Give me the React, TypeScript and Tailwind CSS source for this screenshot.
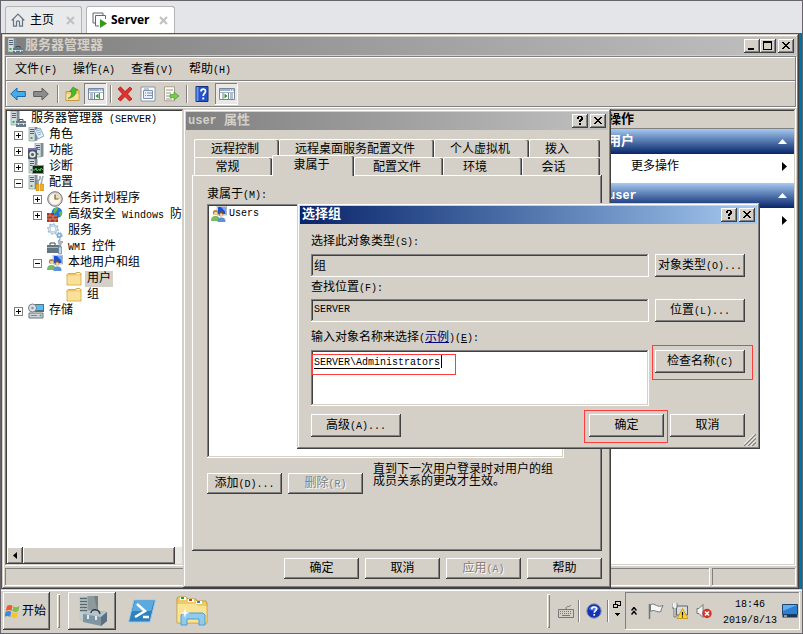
import type { ButtonHTMLAttributes, ReactNode } from "react";
import { clsx } from "clsx";

const raised =
  "bg-[#d4d0c8] shadow-[inset_-1px_-1px_#404040,inset_1px_1px_#fff,inset_-2px_-2px_#808080]";
const frame =
  "bg-[#d4d0c8] shadow-[inset_-1px_-1px_#404040,inset_1px_1px_#d4d0c8,inset_-2px_-2px_#808080,inset_2px_2px_#fff]";
const sunken =
  "shadow-[inset_-1px_-1px_#fff,inset_1px_1px_#808080,inset_-2px_-2px_#d4d0c8,inset_2px_2px_#404040]";
const thinSunken = "shadow-[inset_-1px_-1px_#fff,inset_1px_1px_#808080]";

// Latin runs are half as wide as the Chinese characters beside them
function T({ children, latin = "text-[10px]" }: { children: string; latin?: string }) {
  return (
    <>
      {children.split(/([\x20-\x7e]+)/).map((run, i) =>
        i % 2 ? (
          <span key={i} className={clsx("whitespace-pre", latin)}>
            {run}
          </span>
        ) : (
          run
        ),
      )}
    </>
  );
}

function Button({ className, children, ...rest }: ButtonHTMLAttributes<HTMLButtonElement>) {
  return (
    <button
      type="button"
      className={clsx(
        raised,
        "flex items-center justify-center pt-px whitespace-nowrap disabled:text-[#808080] disabled:[text-shadow:1px_1px_#fff]",
        className,
      )}
      {...rest}
    >
      <span>{children}</span>
    </button>
  );
}

function CaptionButton({ label, children }: { label: string; children: ReactNode }) {
  return (
    <button type="button" aria-label={label} className={clsx(raised, "h-[14px] w-4")}>
      <svg viewBox="0 0 16 14" className="block h-[14px] w-4" shapeRendering="crispEdges">
        {children}
      </svg>
    </button>
  );
}

const closeGlyph = (
  <path
    d="M4 3h2v1h1v1h2V4h1V3h2v1h-1v1h-1v1H9v1h1v1h1v1h1v1h-2V9H9V8H7v1H6v1H4V9h1V8h1V7h1V6H6V5H5V4H4z"
    fill="#000"
  />
);
const helpGlyph = (
  <path d="M5 3h1V2h4v1h1v3h-1v1H9v1H7V6h1V5h1V3H7v2H5zM7 9h2v2H7z" fill="#000" />
);

/* ---------- icons ---------- */

function ServerShape() {
  return (
    <>
      <path d="M7 0h2.500v13.500L7 14z" fill="#7f8d96" />
      <path d="M1 0h6v14H1z" fill="#d5dde2" stroke="#7b8992" strokeWidth=".6" />
      <path d="M2 2.500h4M2 4.500h4M2 6.500h4" stroke="#52626c" />
      <path d="M2.500 10h2v2h-2z" fill="#35b33c" />
    </>
  );
}

function Icon({ name, className = "size-4" }: { name: string; className?: string }) {
  return (
    <svg viewBox="0 0 16 16" className={clsx("block shrink-0", className)} aria-hidden="true">
      {icons[name]}
    </svg>
  );
}

const folder = (
  <>
    <path d="M1 3.500 2 2.500h7l1-1h4l1 1V14H1z" fill="#eec764" stroke="#c19739" strokeWidth=".7" />
    <path d="M1.500 4.500h13v9h-13z" fill="#fbe09a" />
    <path d="M10.500 2.800h3.500" stroke="#fff" />
  </>
);

const people = (
  <>
    <path d="M6 0h9.500v9H6z" fill="#dfe5ea" stroke="#8293a0" strokeWidth=".6" />
    <path d="M7 1h7.500v7H7z" fill="#1b4fd0" />
    <path d="M10 1h4.500v5z" fill="#77a8ff" />
    <circle cx="4.500" cy="6.500" r="2.600" fill="#b9813d" />
    <circle cx="4.800" cy="7.500" r="1.800" fill="#f3d2a9" />
    <path d="M0 15c0-4 2-5 4.500-5S9 11 9 15z" fill="#78bb65" />
    <circle cx="10" cy="8" r="2.400" fill="#84501e" />
    <circle cx="10.200" cy="9" r="1.700" fill="#f3d2a9" />
    <path d="M6.500 16c0-3.500 1.500-4.500 4-4.500s4 1 4 4.500z" fill="#5d93d6" />
  </>
);

const paneToggle = (
  <>
    <path d="M.5 2.500h15v11H.5z" fill="#fff" stroke="#7387a0" />
    <path d="M1 3h14v2H1z" fill="#9fb2ca" />
    <path d="M11 4h1m1 0h1" stroke="#fff" />
    <path d="M1 6.500h14" stroke="#a9b6c8" />
  </>
);

const icons: Record<string, ReactNode> = {
  server: (
    <>
      <ServerShape />
      <path d="M6 10h10v6H6z" fill="#667987" />
      <path d="M9 10V8.500h4V10" fill="none" stroke="#3e4e59" />
      <path d="M6 12.500h10" stroke="#bccad3" />
      <path d="M8 12h1v2H8zM13 12h1v2h-1z" fill="#e5ecf0" />
    </>
  ),
  roles: (
    <>
      <ServerShape />
      <path d="m6 3 6-2 4 8-6 3z" fill="#e5f0f8" stroke="#708fa8" strokeWidth=".8" />
      <path d="m8 4 4-1M9 6l4-1M10 8l3-1" stroke="#6ba1cb" strokeWidth=".8" />
    </>
  ),
  features: (
    <>
      <g transform="translate(6 0)">
        <ServerShape />
      </g>
      <path d="M0 6h9v10H0z" fill="#4a555d" />
      <path d="M0 5h10v2H0z" fill="#7c6eb5" />
      <circle cx="4.500" cy="11.500" r="3.200" fill="#e2e6e8" />
      <circle cx="4.500" cy="11.500" r="1.500" fill="#4d5960" />
    </>
  ),
  diagnostics: (
    <>
      <ServerShape />
      <path d="M4 6h12v9H4z" fill="#8f9ba2" />
      <path d="M5 7h10v7H5z" fill="#102410" />
      <path d="M5 11h2l1-2 1 3 2-2 1 2 1-3 2 2" fill="none" stroke="#37d33c" />
    </>
  ),
  config: (
    <>
      <ServerShape />
      <path d="M8 1v3l2 2v3M12 1v3l-2 2" fill="none" stroke="#8d9aa3" strokeWidth="1.500" />
      <path d="m15 1-2 8" stroke="#a1adb5" strokeWidth="1.500" />
      <path d="M8 9h3v7H8zM12.500 9h3v7h-3z" fill="#f3ae1d" stroke="#b6740b" strokeWidth=".5" />
    </>
  ),
  clock: (
    <>
      <circle cx="8" cy="8" r="7.300" fill="#cfd3d6" stroke="#72777b" />
      <circle cx="8" cy="8" r="5.600" fill="#fff8e5" />
      <path d="M8 2.400A5.600 5.600 0 0 1 13.600 8H8z" fill="#f5d9a4" />
      <path d="M8 3.500V8h3.500" fill="none" stroke="#5a5e62" strokeWidth="1.200" />
    </>
  ),
  firewall: (
    <>
      <circle cx="10" cy="5.500" r="5.300" fill="#2477d8" />
      <path d="M7 2c2-2 4-1 4 0S9 4 8 6 6 4 7 2zM12 5l3-1v3l-2 3z" fill="#66bd45" />
      <path d="M0 6h7v3h4v6H0z" fill="#a93722" />
      <path d="M0 9h10M0 12h11M3 6v3m3 0v3M3 12v3m5-3v3" stroke="#e9a38f" strokeWidth=".7" />
    </>
  ),
  gears: (
    <>
      <circle cx="6" cy="6" r="3.600" fill="none" stroke="#92b6d4" strokeWidth="2.200" />
      <circle cx="6" cy="6" r="5.200" fill="none" stroke="#92b6d4" strokeWidth="1.200" strokeDasharray="2 2" />
      <circle cx="6" cy="6" r="3.600" fill="none" stroke="#dceaf5" />
      <circle cx="12.300" cy="12.300" r="1.800" fill="none" stroke="#7fa8ca" strokeWidth="1.600" />
      <circle cx="12.300" cy="12.300" r="3" fill="none" stroke="#7fa8ca" strokeDasharray="1.500 1.500" />
    </>
  ),
  wmi: (
    <>
      <path d="M0 6h13v8H0z" fill="#627581" />
      <path d="M0 8.500h12" stroke="#a8b7c0" />
      <path d="M3 6V4h5v2" fill="none" stroke="#3c4b55" />
      <path d="m13 0-2 2 1 3v3h2V5l2-2-1-1-1 1-1-1z" fill="#aeb9c0" stroke="#6a7881" strokeWidth=".5" />
      <path d="M11.500 8h3v7h-3z" fill="#b8d4ee" stroke="#4f7ba5" strokeWidth=".6" />
    </>
  ),
  people,
  folder,
  storage: (
    <>
      <path d="M6 1h10v8H6z" fill="#56707d" />
      <path d="M8 2h7v5H8z" fill="#4cc2f4" />
      <circle cx="4.500" cy="5" r="4" fill="#dce2e6" stroke="#747f87" />
      <circle cx="4.500" cy="5" r="1.300" fill="#8997a0" />
      <path d="M1 10h14v5H1z" fill="#ced4d8" stroke="#69747c" />
      <path d="M3 12.500h6" stroke="#7c878e" />
      <circle cx="12.500" cy="12.500" r="1" fill="#35b33c" />
    </>
  ),
  back: <path d="M.7 8 7 2v3.500h8.300v5H7V14z" fill="#45aceb" stroke="#1768ae" />,
  forward: <path d="M15.300 8 9 2v3.500H.7v5H9V14z" fill="#8c8c8c" stroke="#5f5f5f" />,
  folderUp: (
    <>
      <path d="M1 5.500h6l1-2h5l1 1v10H1z" fill="#f3cf6b" stroke="#b98d2c" strokeWidth=".8" />
      <path d="M1.500 8h12v6h-12z" fill="#fbe09a" />
      <path d="M3 12.500c3-1.500 4-4 3.500-7.500l-2 .8L8 1l5 3-2 .6c.6 4-2.500 7-8 7.900z" fill="#4cb830" stroke="#2b7d18" strokeWidth=".5" />
    </>
  ),
  paneLeft: (
    <>
      {paneToggle}
      <path d="M2 8h3m-3 2h3m-3 2h3M6.500 7v6m5-6v6" stroke="#6a7b91" />
      <path d="M10.500 7.500v5L7.500 10z" fill="#249b24" />
    </>
  ),
  paneRight: (
    <>
      {paneToggle}
      <path d="M11 8h3m-3 2h3m-3 2h3M9.500 7v6M4 7v6" stroke="#6a7b91" />
      <path d="M5.500 7.500v5l3-2.500z" fill="#249b24" />
    </>
  ),
  remove: <path d="M1 3 3.500.8 8 5.500 13 1l2 2-4.500 5L15 13l-2.500 2L8 10.500 3.500 15 1 13l4.500-5z" fill="#e1302b" stroke="#a5130f" strokeWidth=".7" />,
  props: (
    <>
      <path d="M1 1h14v14H1z" fill="#fff" stroke="#8497ad" />
      <path d="M3.500 4.500h9v8h-9z" fill="#e9f0f7" stroke="#7c92ab" />
      <path d="M4 3h5M5 7h1m1 0h5M5 9.500h1m1 0h5" stroke="#7c92ab" />
    </>
  ),
  exportList: (
    <>
      <path d="M1.500.8h10v14h-10z" fill="#fffdf3" stroke="#98907a" strokeWidth=".8" />
      <path d="M3 4h7M3 7h5m-5 3h5m-5 3h6" stroke="#7a7a7a" strokeWidth=".8" />
      <path d="M7 8.500h4V6l5 4-5 4v-2.500H7z" fill="#77cb4e" stroke="#3d8f22" strokeWidth=".6" />
    </>
  ),
  book: (
    <>
      <path d="M2 .5h12v15H2z" fill="#2453c9" stroke="#173178" />
      <path d="M2.500 1h2v14h-2z" fill="#6a92e8" />
      <path d="M7 5.500c0-3 4.500-3 4.500-.3C11.500 7.300 9.200 7.500 9.200 10" fill="none" stroke="#fff" strokeWidth="1.700" />
      <path d="M8.300 11.500h1.900v1.900H8.300z" fill="#fff" />
    </>
  ),
};

/* ---------- host tabs ---------- */

function HostTabs() {
  return (
    <nav className="flex h-8 items-end gap-1 pl-1 font-['Open_Sans','Noto_Sans_CJK_SC',sans-serif]">
      <div className="flex h-[27px] w-[77px] items-center rounded-t-[3px] border border-b-0 border-[#b4b4b4] bg-[#e9eaec] pl-[5px]">
        <svg viewBox="0 0 14 14" className="size-[14px]" fill="none" stroke="#667480" strokeWidth="1.200">
          <path d="M.7 7.500 7 1.200l6.300 6.300M2.500 6.500v6.700h3V9q0-1.200 1.500-1.200T8.500 9v4.200h3V6.500" />
        </svg>
        <a href="#home" className="ml-[5px]">主页</a>
        <CloseTab />
      </div>
      <div className="flex h-[27px] w-[89px] items-center rounded-t-[3px] border border-b-0 border-[#b4b4b4] bg-white pl-[5px]">
        <svg viewBox="0 0 16 16" className="size-4">
          <path d="M3 11H1V1h10v2" fill="none" stroke="#5b6b78" />
          <path d="M7 14H3.500V3.500h10V7" fill="none" stroke="#5b6b78" />
          <path d="m8 7 7 4.500L8 16z" fill="#359a1c" />
        </svg>
        <a href="#server" className="ml-[3px] font-bold">Server</a>
        <CloseTab />
      </div>
    </nav>
  );
}

function CloseTab() {
  return (
    <button type="button" aria-label="关闭" className="mr-[6px] ml-auto">
      <svg viewBox="0 0 9 9" className="size-[9px]" stroke="#c0c0c0" strokeWidth="2">
        <path d="m1 1 7 7m0-7L1 8" />
      </svg>
    </button>
  );
}

/* ---------- server manager ---------- */

type Row = { level: 0 | 1 | 2 | 3; icon: string; text: string; box?: "+" | "-"; selected?: boolean };

const rows: Row[] = [
  { level: 0, icon: "server", text: "服务器管理器 (SERVER)" },
  { level: 1, icon: "roles", text: "角色", box: "+" },
  { level: 1, icon: "features", text: "功能", box: "+" },
  { level: 1, icon: "diagnostics", text: "诊断", box: "+" },
  { level: 1, icon: "config", text: "配置", box: "-" },
  { level: 2, icon: "clock", text: "任务计划程序", box: "+" },
  { level: 2, icon: "firewall", text: "高级安全 Windows 防", box: "+" },
  { level: 2, icon: "gears", text: "服务" },
  { level: 2, icon: "wmi", text: "WMI 控件" },
  { level: 2, icon: "people", text: "本地用户和组", box: "-" },
  { level: 3, icon: "folder", text: "用户", selected: true },
  { level: 3, icon: "folder", text: "组" },
  { level: 1, icon: "storage", text: "存储", box: "+" },
];

const indent = ["pl-[3px]", "pl-[7px]", "pl-[26px]", "pl-[45px]"];

function Tree() {
  return (
    <ul className="flex-1 overflow-hidden">
      {rows.map((row) => (
        <li key={row.text} className={clsx("flex h-4 items-center whitespace-nowrap", indent[row.level])}>
          {row.level > 0 && (
            <span className="w-[14px] shrink-0">
              {row.box && (
                <svg viewBox="0 0 9 9" className="block size-[9px]" shapeRendering="crispEdges">
                  <path d="M.5.5h8v8h-8z" fill="#fff" stroke="#808080" />
                  <path d={row.box === "+" ? "M2 4.500h5M4.500 2v5" : "M2 4.500h5"} stroke="#000" />
                </svg>
              )}
            </span>
          )}
          <Icon name={row.icon} />
          <span className={clsx("ml-[3px] h-4 px-[2px] leading-4", row.selected && "bg-[#d4d0c8]")}>
            <T>{row.text}</T>
          </span>
        </li>
      ))}
    </ul>
  );
}

function ToolSeparator() {
  return <span className="h-[18px] w-[2px] border-l border-[#808080] bg-white" />;
}

const toggled =
  "flex h-[22px] w-[23px] items-center justify-center bg-[#eae8e4] shadow-[inset_-1px_-1px_#fff,inset_1px_1px_#808080]";

function Toolbar() {
  return (
    <div className="flex h-[25px] items-center border-t border-white pl-1">
      <button type="button" aria-label="后退"><Icon name="back" /></button>
      <button type="button" aria-label="前进" className="ml-[7px]"><Icon name="forward" /></button>
      <span className="w-2" />
      <ToolSeparator />
      <button type="button" aria-label="向上" className="ml-[6px]"><Icon name="folderUp" /></button>
      <button type="button" aria-label="显示树" className={clsx(toggled, "ml-[3px]")}><Icon name="paneLeft" /></button>
      <span className="w-[3px]" />
      <ToolSeparator />
      <button type="button" aria-label="删除" className="ml-[5px]"><Icon name="remove" /></button>
      <button type="button" aria-label="属性" className="ml-[7px]"><Icon name="props" /></button>
      <button type="button" aria-label="导出列表" className="ml-[7px]"><Icon name="exportList" /></button>
      <span className="w-[7px]" />
      <ToolSeparator />
      <button type="button" aria-label="帮助" className="ml-[6px]"><Icon name="book" /></button>
      <button type="button" aria-label="显示操作" className={clsx(toggled, "ml-[5px]")}><Icon name="paneRight" /></button>
    </div>
  );
}

function ActionHeader({ title }: { title: string }) {
  return (
    <div className="flex h-[25px] items-center justify-between bg-linear-to-b from-[#a6caf0] to-[#0a246a] pr-[7px] pl-[5px] text-[13px] font-bold text-white">
      <span><T latin="text-[12px]">{title}</T></span>
      <svg viewBox="0 0 9 5" className="h-[5px] w-[9px]" fill="#fff">
        <path d="M4.500 0 9 5H0z" />
      </svg>
    </div>
  );
}

function ActionLink({ id }: { id: string }) {
  return (
    <a href={`#${id}`} className="flex h-[29px] items-center justify-between pr-[7px] pb-1 pl-[28px]">
      更多操作
      <svg viewBox="0 0 5 9" className="h-[9px] w-[5px]">
        <path d="M0 0v9l5-4.500z" />
      </svg>
    </a>
  );
}

function ServerManager() {
  return (
    <section className={clsx(frame, "mt-px mr-[3px] ml-px flex flex-1 flex-col p-[3px]")}>
      <header className="flex h-[18px] items-center bg-linear-to-r from-[#808080] to-[#c0c0c0] pr-[2px] pl-[2px]">
        <Icon name="server" />
        <h1 className="ml-[2px] text-[13px] leading-4 font-bold text-[#d4d0c8]">服务器管理器</h1>
        <div className="ml-auto flex">
          <CaptionButton label="最小化"><path d="M4 9h6v2H4z" /></CaptionButton>
          <CaptionButton label="最大化"><path d="M3 2h9v9H3zm1 2v6h7V4z" fillRule="evenodd" /></CaptionButton>
          <span className="w-[2px]" />
          <CaptionButton label="关闭">{closeGlyph}</CaptionButton>
        </div>
      </header>

      <div className="mt-px border border-[#808080] shadow-[inset_1px_1px_#fff,1px_1px_#fff]">
        <nav className="flex h-6 items-center gap-4 border-b border-[#808080] pt-[3px] pl-[9px]">
          {["文件(F)", "操作(A)", "查看(V)", "帮助(H)"].map((item) => (
            <button key={item} type="button"><T>{item}</T></button>
          ))}
        </nav>
        <Toolbar />
      </div>

      <div className="mt-[2px] flex flex-1 gap-[2px]">
        <div className={clsx(sunken, "flex w-[179px] flex-col bg-white p-[2px]")}>
          <Tree />
          <div className="flex h-[17px] bg-[#eae8e4]">
            <button type="button" aria-label="向左滚动" className={clsx(raised, "flex w-4 items-center justify-center")}>
              <svg viewBox="0 0 4 7" className="h-[7px] w-1"><path d="M4 0v7L0 3.500z" /></svg>
            </button>
            <span className={clsx(raised, "w-[152px]")} />
          </div>
        </div>
        <div className={clsx(sunken, "flex-1 bg-white")} />
        <aside className={clsx(sunken, "w-[195px] bg-white p-[2px]")}>
          <h2 className="h-[18px] border-b border-[#808080] bg-[#d4d0c8] pl-[5px] text-[13px] leading-[18px] font-bold">操作</h2>
          <ActionHeader title="用户" />
          <ActionLink id="more" />
          <ActionHeader title="user" />
          <ActionLink id="more-user" />
        </aside>
      </div>

      <footer className="mt-[2px] flex h-[18px] gap-[2px]">
        <span className={clsx(thinSunken, "flex-1")} />
        <span className={clsx(thinSunken, "w-[84px]")} />
      </footer>
    </section>
  );
}

/* ---------- dialogs ---------- */

function DialogTitle({ title, active }: { title: string; active?: boolean }) {
  return (
    <header
      className={clsx(
        "flex h-[18px] items-center gap-[2px] bg-linear-to-r pr-[2px] pl-[2px] text-[13px] leading-4 font-bold",
        active ? "from-[#0a246a] to-[#a6caf0] text-white" : "from-[#808080] to-[#c0c0c0] text-[#d4d0c8]",
      )}
    >
      <h2 className="mr-auto"><T latin="text-[12px]">{title}</T></h2>
      <CaptionButton label="帮助">{helpGlyph}</CaptionButton>
      <CaptionButton label="关闭">{closeGlyph}</CaptionButton>
    </header>
  );
}

const tab =
  "h-[18px] rounded-t-[2px] border-t border-l border-white pt-[3px] text-center leading-[14px] whitespace-nowrap shadow-[inset_-1px_0_#404040,inset_-2px_0_#808080]";

function UserProperties() {
  return (
    <section role="dialog" className={clsx(frame, "absolute top-[76px] left-[182px] w-[428px] p-[3px] pb-[9px]")}>
      <DialogTitle title="user 属性" />
      <div className="mt-[9px] px-[6px]">
        <div role="tablist" className="px-[2px]">
          <div className="flex">
            <button role="tab" className={clsx(tab, "w-[85px] pr-1")}>远程控制</button>
            <button role="tab" className={clsx(tab, "w-[155px] pr-1")}>远程桌面服务配置文件</button>
            <button role="tab" className={clsx(tab, "w-[95px] pr-1")}>个人虚拟机</button>
            <button role="tab" className={clsx(tab, "flex-1 pr-4")}>拨入</button>
          </div>
          <div className="flex h-[18px] items-end">
            <button role="tab" className={clsx(tab, "w-[78px] pr-3")}>常规</button>
            <button role="tab" aria-selected="true" className={clsx(tab, "z-10 -mb-px h-[21px] w-[82px] bg-[#d4d0c8] pr-1 pb-[3px]")}>隶属于</button>
            <button role="tab" className={clsx(tab, "w-[89px] pr-1")}>配置文件</button>
            <button role="tab" className={clsx(tab, "w-[79px] pr-4")}>环境</button>
            <button role="tab" className={clsx(tab, "flex-1 pr-4")}>会话</button>
          </div>
        </div>
        <div className={clsx(raised, "h-[376px] px-[15px] pt-3")}>
          <h3 className="mb-px h-4 leading-4"><T>隶属于(M):</T></h3>
          <ul className={clsx(sunken, "h-[254px] w-[357px] bg-white p-[2px] pl-1")}>
            <li className="flex h-4 items-center gap-[2px]">
              <Icon name="people" />
              <T>Users</T>
            </li>
          </ul>
          <div className="mt-[6px] flex gap-[6px]">
            <Button className="mt-[9px] h-[21px] w-[75px]"><T>添加(D)...</T></Button>
            <Button className="mt-[9px] h-[21px] w-[75px]" disabled><T>删除(R)</T></Button>
            <p className="ml-1 w-[184px] leading-3">直到下一次用户登录时对用户的组成员关系的更改才生效。</p>
          </div>
        </div>
        <div className="mt-[7px] flex justify-end gap-[6px]">
          <Button className="h-[21px] w-[75px]">确定</Button>
          <Button className="h-[21px] w-[75px]">取消</Button>
          <Button className="h-[21px] w-[75px]" disabled><T>应用(A)</T></Button>
          <Button className="h-[21px] w-[75px]">帮助</Button>
        </div>
      </div>
    </section>
  );
}

function SelectGroup() {
  return (
    <section role="dialog" className={clsx(frame, "absolute top-[170px] left-[296px] w-[463px] p-[3px] pb-3")}>
      <DialogTitle title="选择组" active />
      <form className="pt-[10px] pr-3 pl-[11px]">
        <label htmlFor="kind" className="block h-4 leading-4"><T>选择此对象类型(S):</T></label>
        <div className="mt-1 flex gap-[6px]">
          <input id="kind" readOnly defaultValue="组" className={clsx(sunken, "h-[23px] min-w-0 flex-1 px-[3px] pb-[2px]")} />
          <Button className="h-[23px] w-[90px]"><T>对象类型(O)...</T></Button>
        </div>
        <label htmlFor="place" className="mt-[3px] block h-4 leading-4"><T>查找位置(F):</T></label>
        <div className="mt-[3px] flex gap-[6px]">
          <input id="place" readOnly defaultValue="SERVER" className={clsx(sunken, "h-[23px] min-w-0 flex-1 px-[3px] pb-[3px] text-[10px]")} />
          <Button className="h-[23px] w-[90px]"><T>位置(L)...</T></Button>
        </div>
        <label htmlFor="names" className="mt-2 block h-4 leading-4">
          输入对象名称来选择<T>(</T>
          <a href="#examples" className="text-[#000080] underline">示例</a>
          <T>)(</T>
          <span className="text-[10px] underline">E</span>
          <T>):</T>
        </label>
        <div className="mt-1 flex gap-[6px]">
          <div className="relative flex-1">
            <textarea
              id="names"
              defaultValue="SERVER\Administrators"
              spellCheck={false}
              className={clsx(sunken, "block h-14 w-full resize-none bg-white px-[3px] py-[5px] text-[10px] leading-4 underline underline-offset-[3px]")}
            />
            <span className="absolute top-1 left-[130px] h-[14px] w-px bg-black" />
            <span className="pointer-events-none absolute top-1 left-px h-[21px] w-[144px] border border-[#ff3b3b]" />
          </div>
          <div className="relative h-[23px]">
            <Button className="h-[23px] w-[90px]"><T>检查名称(C)</T></Button>
            <span className="pointer-events-none absolute -top-[5px] -right-2 -bottom-[7px] -left-[3px] border border-[#ff3b3b]" />
          </div>
        </div>
        <div className="mt-2 flex gap-[6px]">
          <Button className="mr-auto h-[23px] w-[90px]"><T>高级(A)...</T></Button>
          <div className="relative">
            <Button className="h-[23px] w-[75px]">确定</Button>
            <span className="pointer-events-none absolute -top-1 -right-1 -bottom-[6px] -left-[5px] border border-[#ff3b3b]" />
          </div>
          <Button className="h-[23px] w-[75px]">取消</Button>
        </div>
      </form>
      <svg viewBox="0 0 12 12" className="absolute right-1 bottom-[3px] size-3" strokeWidth="1.500">
        <path d="M0 12 12 0M4 12l8-8M8 12l4-4" stroke="#808080" />
        <path d="M-1.500 12 12-1.500M2.500 12 12 2.500M6.500 12 12 6.500" stroke="#fff" strokeWidth="1" />
      </svg>
    </section>
  );
}

/* ---------- taskbar ---------- */

function Taskbar() {
  return (
    <footer className="flex h-11 items-center bg-[#d4d0c8] pr-[2px] pl-[2px] shadow-[inset_0_1px_#d4d0c8,inset_0_2px_#fff]">
      <button type="button" className={clsx(raised, "flex h-[38px] w-[47px] items-center pl-[2px]")}>
        <svg viewBox="0 0 16 16" className="size-4">
          <path d="M2 3c2-1.500 4-1.500 5.500 0L6.500 8C5 6.800 3 6.800.8 8z" fill="#ef5a28" />
          <path d="M8.500 3.300c2 1.300 4 1 6-.3l-1.200 5c-2 1.300-4 1.300-5.800 0z" fill="#7cc142" />
          <path d="M.6 9c2-1.300 4-1.300 5.700 0l-1.200 5C3.500 12.800 1.500 12.800-.5 14z" fill="#3a8ae0" />
          <path d="M7.200 9.200c2 1.300 4 1.200 5.900-.2l-1.300 5c-2 1.300-4 1.300-5.800 0z" fill="#fcc31e" />
        </svg>
        <span className="ml-px pt-[2px]">开始</span>
      </button>
      <span className="ml-[7px] h-[34px] w-[3px] shadow-[inset_1px_1px_#fff,inset_-1px_-1px_#808080]" />
      <button type="button" aria-label="服务器管理器" className={clsx(raised, "ml-2 flex h-[38px] w-12 items-center justify-center")}>
        <svg viewBox="0 0 32 32" className="size-8">
          <path d="M3 1h19v26H9l-6-3z" fill="#a3b0b3" />
          <path d="M3 1h8v26l-8-3z" fill="#c3ced1" />
          <path d="M4 3.500h7M4 6.500h7M4 9.500h7M4 12.500h7M4 15.500h7" stroke="#5c676c" strokeWidth="1.300" />
          <path d="M12 1h10v18H12z" fill="#8c999d" />
          <path d="M18 1h4v18z" fill="#748287" />
          <path d="m7 19 6-4 18 2v9l-6 5-18-4z" fill="#7f95a3" />
          <path d="m7 19 6-4 18 2-6 5z" fill="#b4c3cc" />
          <path d="m25 22 6-5v9l-6 5z" fill="#5b717f" />
          <path d="M15 18c0-4.500 8-4.500 9 1" fill="none" stroke="#333f46" strokeWidth="1.400" />
          <path d="M11 20h2v4h-2zM19 21h2v4h-2z" fill="#e6ecef" />
        </svg>
      </button>
      <a href="#powershell" aria-label="PowerShell" className="ml-3">
        <svg viewBox="0 0 28 24" className="h-6 w-7">
          <path d="M6 1h21.500L22 23H.5z" fill="#2f82bf" stroke="#9ccdec" />
          <path d="M7 2h19l-3 10H4z" fill="#5aaade" />
          <path d="m9 5 8 7-10 6M15 18h6" fill="none" stroke="#fff" strokeWidth="2.500" />
        </svg>
      </a>
      <a href="#explorer" aria-label="资源管理器" className="ml-5">
        <svg viewBox="0 0 32 30" className="h-[30px] w-8">
          <path d="M1 4V2l1-1h8l2 2h8l1 2h9l1 2v20H1z" fill="#edcb68" stroke="#c39e3d" />
          <path d="M4 1h6v3H4zM12 3h6v3h-6zM20 5h6v3h-6z" fill="#fff" />
          <path d="M5 1h3v2H5z" fill="#0fae2a" />
          <path d="M13 3h3v2h-3z" fill="#d83a22" />
          <path d="M21 5h3v2h-3z" fill="#1e8bd7" />
          <path d="M1.500 8H20l2 2h8.500v16.500h-29z" fill="#fae394" />
          <path d="M5 29V19l2-2h20l2 2v10h-6v-6H11v6z" fill="#8fcbee" stroke="#4f9dcc" />
          <path d="m9 12 1 4 4 1-4 1-1 4-1-4-4-1 4-1z" fill="#fff" />
        </svg>
      </a>

      <div className="ml-auto flex items-center">
        <span className="h-[34px] w-[3px] shadow-[inset_1px_1px_#fff,inset_-1px_-1px_#808080]" />
        <svg viewBox="0 0 16 14" className="ml-2 h-[14px] w-4" fill="none" stroke="#77777a">
          <path d="M.5 5.500h15v8H.5zM8 5c0-4 3-1 5-4" />
          <path d="M2 7.500h12M2 9.500h12" strokeDasharray="1 1" />
          <path d="M4 11.500h8" />
        </svg>
        <span className="ml-1 h-[22px] w-[2px] border-l border-[#808080] bg-white" />
        <svg viewBox="0 0 16 16" className="ml-[6px] size-4">
          <circle cx="8" cy="8" r="7.200" fill="#1235b4" stroke="#888fa5" />
          <path d="M3 6c1-4 9-4 10 0-3 2-7 2-10 0z" fill="#537be6" />
          <path d="M5.700 6.300c0-3 4.800-3 4.800-.4C10.500 7.800 8.200 7.800 8.200 9.700" fill="none" stroke="#fff" strokeWidth="1.600" />
          <path d="M7.400 11h1.700v1.700H7.400z" fill="#fff" />
        </svg>
        <span className="ml-[5px] h-[22px] w-[2px] border-l border-[#808080] bg-white" />
        <svg viewBox="0 0 8 16" className="mb-1 ml-1 h-4 w-2" shapeRendering="crispEdges">
          <path d="M2.500 3V.5h5v4H5M.5 3.500h4v3h-4z" fill="none" stroke="#000" />
          <path d="M1 12h6l-3 3z" />
        </svg>
        <div className={clsx(thinSunken, "ml-1 flex h-[38px] items-center pr-[2px] pl-[6px]")}>
          <svg viewBox="0 0 6 8" className="h-2 w-[6px]" fill="none" stroke="#000" strokeWidth="1.500">
            <path d="m.5 3.500 2.500-3 2.500 3m-5 4 2.500-3 2.500 3" />
          </svg>
          <svg viewBox="0 0 16 16" className="ml-[11px] size-4">
            <path d="M1.500 1v15" stroke="#74777a" strokeWidth="1.500" />
            <path d="M2.500 1.500c3-1 4 0 6 1s4 1 6.500 0c-1 2-2 4-2 6-2 1-4 0-5.500-.6s-3-.4-5 .4z" fill="#f8f8f8" stroke="#74777a" />
          </svg>
          <svg viewBox="0 0 16 16" className="ml-2 size-4">
            <path d="M4.500 3h11v9h-11z" fill="#d8dcdf" stroke="#5c646b" />
            <path d="M0 0v5h2v9h2V5h1V0" fill="#eee" stroke="#5c646b" strokeWidth=".8" />
            <path d="M10.500 5.500 16 15.500H5z" fill="#ffd52c" stroke="#b58a06" strokeWidth=".7" />
            <path d="M10.500 9v3.500m0 1v1" stroke="#000" strokeWidth="1.200" />
          </svg>
          <svg viewBox="0 0 16 16" className="ml-2 size-4">
            <path d="M1 5.500h2l4-4v13l-4-4H1z" fill="#f4f4f4" stroke="#73777b" />
            <circle cx="11" cy="10.500" r="4.700" fill="#d8322b" />
            <path d="m9 8.500 4 4m0-4-4 4" stroke="#fff" strokeWidth="1.500" />
          </svg>
          <div className="ml-[10px] w-[56px] pt-[3px] text-center text-[10px] leading-4">
            <div>18:46</div>
            <div>2019/8/13</div>
          </div>
          <svg viewBox="0 0 16 14" className="ml-1 h-[14px] w-4">
            <path d="M.5.5h15v10H.5z" fill="#2d7dd0" stroke="#1c4772" />
            <path d="M1 1h14L1 7z" fill="#64aeea" />
            <path d="M.5 10.500h15v3H.5z" fill="#1f3550" />
            <path d="M2 12h3" stroke="#fff" />
          </svg>
        </div>
      </div>
    </footer>
  );
}

export default function App() {
  return (
    <div className="flex min-h-screen flex-col border border-[#67636a] bg-[#e4e5e8] font-['Liberation_Mono','Noto_Sans_CJK_SC',monospace] text-[12px] leading-4 text-black">
      <HostTabs />
      <main className="relative flex flex-1 flex-col bg-[#0073a0]">
        <ServerManager />
        <UserProperties />
        <SelectGroup />
        <Taskbar />
      </main>
    </div>
  );
}
